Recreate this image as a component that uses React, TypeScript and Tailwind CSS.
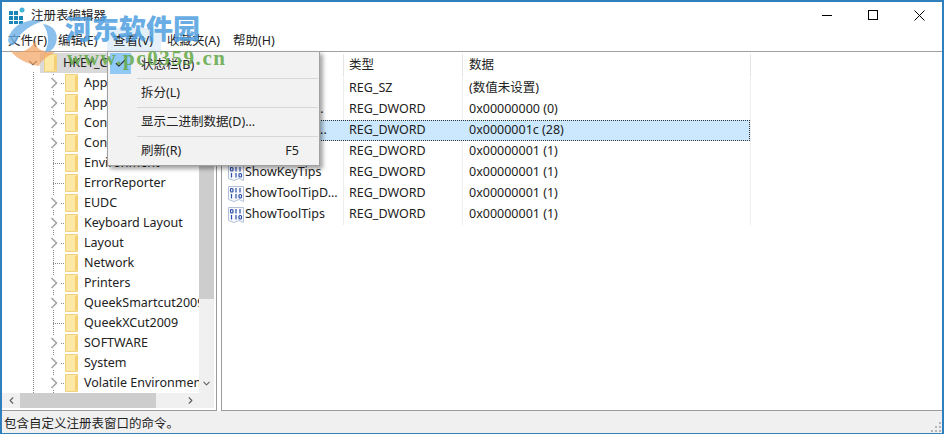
import { ChevronDown, ChevronLeft, ChevronRight, Check } from "lucide-react";

const FONT = "font-['Noto_Sans','Noto_Sans_CJK_SC',sans-serif]";

const treeRows: { name: string; arrow: boolean }[] = [
  { name: "AppEvents", arrow: true },
  { name: "AppXBackup", arrow: true },
  { name: "Console", arrow: true },
  { name: "Control Panel", arrow: true },
  { name: "Environment", arrow: false },
  { name: "ErrorReporter", arrow: false },
  { name: "EUDC", arrow: true },
  { name: "Keyboard Layout", arrow: true },
  { name: "Layout", arrow: true },
  { name: "Network", arrow: false },
  { name: "Printers", arrow: true },
  { name: "QueekSmartcut2009", arrow: true },
  { name: "QueekXCut2009", arrow: false },
  { name: "SOFTWARE", arrow: true },
  { name: "System", arrow: true },
  { name: "Volatile Environment", arrow: true },
];

const valueRows = [
  { name: "(默认)", type: "REG_SZ", data: "(数值未设置)" },
  { name: "ExtendedUI...", type: "REG_DWORD", data: "0x00000000 (0)" },
  { name: "MenuShowT...", type: "REG_DWORD", data: "0x0000001c (28)", selected: true },
  { name: "ShowHints", type: "REG_DWORD", data: "0x00000001 (1)" },
  { name: "ShowKeyTips", type: "REG_DWORD", data: "0x00000001 (1)" },
  { name: "ShowToolTipD...", type: "REG_DWORD", data: "0x00000001 (1)" },
  { name: "ShowToolTips", type: "REG_DWORD", data: "0x00000001 (1)" },
];

function Folder() {
  return (
    <svg width="13" height="18" viewBox="0 0 13 18" className="shrink-0">
      <path d="M0.5 0.5H12.5V17.5H0.5Z" fill="#fde8a6" stroke="#f1d27e" />
      <path d="M10 3L12.5 0.5V15L10 17.5Z" fill="#f5cf72" />
    </svg>
  );
}

function RegIcon() {
  return (
    <svg width="16" height="16" viewBox="0 0 16 16" className="shrink-0">
      <path d="M0.5 0.5H15.5V15.5L11 13.5L6 15.5L0.5 13.5Z" fill="#f7f9fd" stroke="#b4c0da" />
      <g fill="none" stroke="#2d4fa8" strokeWidth="1.2">
        <rect x="2.5" y="2.5" width="2.5" height="3.5" rx="1" />
        <path d="M8 2V6.5M12 2V6.5M3.5 8V12.5M8 8V12.5" />
        <rect x="11" y="8.5" width="2.5" height="3.5" rx="1" />
      </g>
    </svg>
  );
}

function TreeArrow() {
  return (
    <span className="absolute left-[45px] w-[13px] h-[14px] bg-white flex items-center justify-center">
      <svg width="8" height="12" viewBox="0 0 8 12">
        <path d="M1.5 1L6.5 6L1.5 11" fill="none" stroke="#a8a8a8" strokeWidth="1.7" />
      </svg>
    </span>
  );
}

function TreePane() {
  return (
    <div className="w-[215px] h-full border-r border-b border-[#9b9b9b] flex flex-col bg-white">
      <div className="flex-1 flex min-h-0">
        <div className="flex-1 min-w-0 overflow-hidden pt-[1px] relative">
          {/* dotted tree lines */}
          <div className="absolute left-[31px] top-[20px] bottom-0 border-l border-dotted border-[#8a8a8a]" />
          <div className="absolute left-[51px] top-[22px] bottom-0 border-l border-dotted border-[#8a8a8a]" />
          <div className="h-5 flex items-center pl-[24px] relative">
            <ChevronDown size={14} strokeWidth={2} className="text-[#555] shrink-0" />
            <div className="h-5 flex items-center bg-[#d9d9d9] pl-[4px] pr-6 gap-[6px]">
              <Folder />
              <span className="whitespace-nowrap">HKEY_CURRENT_USER</span>
            </div>
          </div>
          {treeRows.map((r) => (
            <div key={r.name} className="h-5 flex items-center pl-[63px] gap-[6px] relative whitespace-nowrap">
              <div className="absolute left-[51px] w-[11px] top-1/2 border-t border-dotted border-[#8a8a8a]" />
              {r.arrow && <TreeArrow />}
              <Folder />
              <span>{r.name}</span>
            </div>
          ))}
        </div>
        <div className="w-[15px] mr-[2px] bg-[#f0f0f0] flex flex-col shrink-0">
          <div className="h-[247px] bg-[#cdcdcd]" />
          <div className="flex-1" />
          <div className="h-[20px] flex items-center justify-center">
            <ChevronDown size={11} strokeWidth={2.2} className="text-[#606060]" />
          </div>
        </div>
      </div>
      <div className="h-[15px] mb-[2px] mr-[2px] flex bg-[#f0f0f0] shrink-0">
        <div className="w-[18px] flex items-center justify-center">
          <ChevronLeft size={11} strokeWidth={2.4} className="text-[#606060]" />
        </div>
        <div className="w-[136px] bg-[#cdcdcd]" />
        <div className="w-[26px]" />
        <div className="w-[17px] flex items-center justify-center">
          <ChevronRight size={11} strokeWidth={2.4} className="text-[#606060]" />
        </div>
      </div>
    </div>
  );
}

function ListPane() {
  return (
    <div className="flex-1 h-full border-l border-b border-[#9b9b9b] bg-white overflow-hidden">
      <div className="h-[24px] mt-[2px] pb-[1px] flex">
        <div className="w-[122px] border-r border-[#e5e5e5] pl-[24px] flex items-center">名称</div>
        <div className="w-[119px] border-r border-[#e5e5e5] pl-[5px] flex items-center">类型</div>
        <div className="w-[288px] border-r border-[#e5e5e5] pl-[6px] flex items-center">数据</div>
      </div>
      <div className="relative">
        <div className="absolute top-0 left-[121px] w-px h-[147px] bg-[#eeeeee]" />
        <div className="absolute top-0 left-[240px] w-px h-[147px] bg-[#eeeeee]" />
        <div className="absolute top-0 left-[528px] w-px h-[147px] bg-[#eeeeee]" />
        {valueRows.map((r) => (
          <div
            key={r.name}
            className={
              r.selected
                ? "h-[21px] w-[528px] flex items-center bg-[#cce8ff] outline-1 outline-dotted -outline-offset-1 outline-[#333] relative"
                : "h-[21px] w-[528px] flex items-center relative"
            }
          >
            <div className="w-[121px] pl-[6px] flex items-center gap-[1px] overflow-hidden whitespace-nowrap">
              <RegIcon />
              <span>{r.name}</span>
            </div>
            <div className="w-[120px] pl-[6px]">{r.type}</div>
            <div className="pl-[6px]">{r.data}</div>
          </div>
        ))}
      </div>
    </div>
  );
}

function MenuItem({ label, shortcut }: { label: string; shortcut?: string }) {
  return (
    <div className="h-[28px] flex items-center justify-between pl-[33px] pr-[8px]">
      <span>{label}</span>
      {shortcut && <span className="pr-[12px]">{shortcut}</span>}
    </div>
  );
}

function ViewMenu() {
  return (
    <div className="absolute left-[105px] top-[49px] w-[213px] h-[115px] bg-[#f2f2f2] border border-[#a0a0a0] shadow-[3px_3px_4px_rgba(0,0,0,0.35)] z-10 text-[#222]">
      <div className="h-[26px] flex items-center relative">
        <div className="absolute left-[2px] top-[1px] w-[21px] h-[21px] bg-[#90c8f6] flex items-center justify-center">
          <Check size={13} strokeWidth={2} className="text-[#333]" />
        </div>
        <span className="pl-[33px]">状态栏(B)</span>
      </div>
      <div className="ml-[29px] mr-[1px] border-t border-[#d7d7d7]" />
      <MenuItem label="拆分(L)" />
      <div className="ml-[29px] mr-[1px] border-t border-[#d7d7d7]" />
      <MenuItem label="显示二进制数据(D)..." />
      <div className="ml-[29px] mr-[1px] border-t border-[#d7d7d7]" />
      <MenuItem label="刷新(R)" shortcut="F5" />
    </div>
  );
}

function Watermark() {
  return (
    <div className="absolute left-0 top-0 z-20 pointer-events-none">
      <svg width="60" height="56" viewBox="0 0 60 56" className="absolute left-[3px] top-[14px]">
        <path d="M3 24C6 10 20 2 38 5C26 9 15 16 11 26C8 31 4 30 3 24Z" fill="#6db0e6" opacity="0.8" />
        <path d="M38 8C49 9 54 18 51 27C49 33 45 36 39 37C44 30 45 18 38 8Z" fill="#6db0e6" opacity="0.8" />
        <path d="M5 34C14 38 24 36 31 24C30 33 36 36 50 36C42 41 36 44 34 50C24 48 12 44 5 34Z" fill="#f2a15f" opacity="0.7" />
      </svg>
      <span className="absolute left-[63px] top-[8px] whitespace-nowrap font-['Noto_Sans_CJK_SC',sans-serif] font-black text-[27px] leading-[36px] text-[#4f9fe0] opacity-85">
        河东软件园
      </span>
      <span className="absolute left-[65px] top-[45px] whitespace-nowrap font-['Liberation_Serif',serif] font-bold text-[21px] leading-[22px] tracking-[1.6px] text-[#62a845] opacity-85">
        www.pc0359.cn
      </span>
    </div>
  );
}

export default function App() {
  return (
    <div className={`${FONT} relative w-[944px] h-[434px] overflow-hidden bg-white text-[12.5px] text-[#222] border-x-2 border-t-2 border-b border-[#2f7fbd] flex flex-col`}>
      {/* title bar */}
      <div className="h-[26px] flex items-center shrink-0 pl-[7px] relative">
        <svg width="17" height="17" viewBox="0 0 17 17" className="shrink-0">
          <g fill="#1a86b8">
            <rect x="0" y="4" width="4" height="4" />
            <rect x="5" y="4" width="4" height="4" />
            <rect x="0" y="9" width="4" height="4" />
            <rect x="5" y="9" width="4" height="4" />
            <rect x="10" y="9" width="4" height="4" />
            <rect x="0" y="14" width="4" height="3" />
            <rect x="5" y="14" width="4" height="3" />
            <rect x="10" y="14" width="4" height="3" />
          </g>
          <circle cx="13" cy="3" r="2.5" fill="#45b6d8" />
        </svg>
        <span className="ml-[5px] pt-[2px]">注册表编辑器</span>
        <div className="ml-auto flex items-center">
          <div className="w-[46px] flex justify-center">
            <div className="w-[10px] border-t border-black" />
          </div>
          <div className="w-[46px] flex justify-center">
            <div className="w-[10px] h-[10px] border border-black" />
          </div>
          <div className="w-[46px] flex justify-center">
            <svg width="11" height="11" viewBox="0 0 11 11">
              <path d="M0.5 0.5L10.5 10.5M10.5 0.5L0.5 10.5" stroke="#000" fill="none" />
            </svg>
          </div>
        </div>
      </div>

      {/* menu bar */}
      <div className="h-[23px] flex items-center shrink-0 border-b border-[#a0a0a0] box-content">
        <div className="w-[56px] h-full pt-[4px] pl-[6px] flex items-center whitespace-nowrap">文件(F)</div>
        <div className="w-[49px] h-full pt-[4px] flex items-center whitespace-nowrap">编辑(E)</div>
        <div className="w-[54px] h-full pt-[4px] pl-[6px] flex items-center whitespace-nowrap bg-[#e3f0fa]">查看(V)</div>
        <div className="w-[72px] h-full pt-[4px] pl-[6px] flex items-center whitespace-nowrap">收藏夹(A)</div>
        <div className="h-full pt-[4px] flex items-center whitespace-nowrap">帮助(H)</div>
      </div>

      {/* panes */}
      <div className="flex-1 flex min-h-0 gap-[4px] isolate">
        <TreePane />
        <ListPane />
      </div>

      {/* status bar */}
      <div className="h-[22px] bg-[#f0f0f0] flex items-center pl-[2px] pt-[4px] shrink-0 relative">
        包含自定义注册表窗口的命令。
        <svg width="12" height="12" viewBox="0 0 12 12" className="absolute right-0 bottom-0">
          <g fill="#b5b5b5">
            <rect x="9" y="1" width="2" height="2" />
            <rect x="5" y="5" width="2" height="2" />
            <rect x="9" y="5" width="2" height="2" />
            <rect x="1" y="9" width="2" height="2" />
            <rect x="5" y="9" width="2" height="2" />
            <rect x="9" y="9" width="2" height="2" />
          </g>
        </svg>
      </div>

      <ViewMenu />
      <Watermark />
    </div>
  );
}
